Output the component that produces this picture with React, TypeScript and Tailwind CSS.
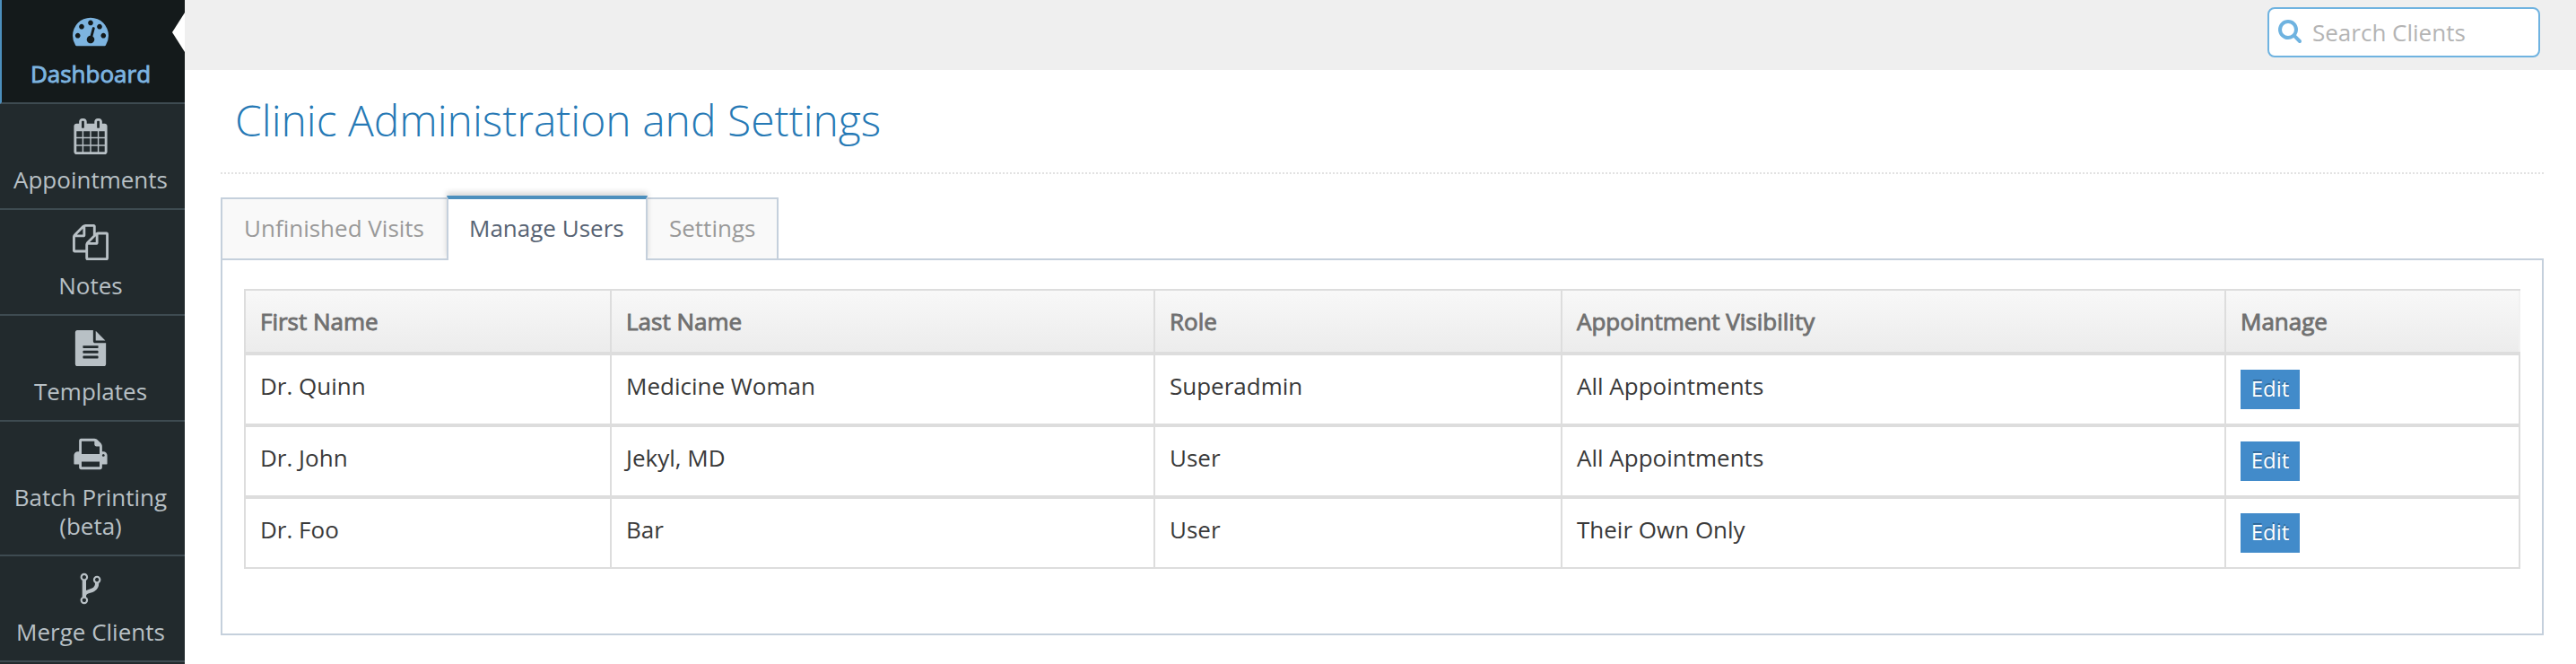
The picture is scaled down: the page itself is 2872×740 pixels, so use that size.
import React from "react";

type IconName = "dashboard" | "calendar" | "files" | "fileText" | "print" | "fork" | "search";

const ICONS: Record<IconName, string> = {
  dashboard:
    "M384 1152q0-53-37.5-90.5t-90.5-37.5-90.5 37.5-37.5 90.5 37.5 90.5 90.5 37.5 90.5-37.5 37.5-90.5zm192-448q0-53-37.5-90.5t-90.5-37.5-90.5 37.5-37.5 90.5 37.5 90.5 90.5 37.5 90.5-37.5 37.5-90.5zm428 481l101-382q6-26-7.5-48.5t-38.5-29.5-48 6.5-30 39.5l-101 382q-60 5-107 43.5t-63 98.5q-20 77 20 146t117 89 146-20 89-117q16-60-6-117t-72-91zm660-33q0-53-37.5-90.5t-90.5-37.5-90.5 37.5-37.5 90.5 37.5 90.5 90.5 37.5 90.5-37.5 37.5-90.5zm-640-640q0-53-37.5-90.5t-90.5-37.5-90.5 37.5-37.5 90.5 37.5 90.5 90.5 37.5 90.5-37.5 37.5-90.5zm448 192q0-53-37.5-90.5t-90.5-37.5-90.5 37.5-37.5 90.5 37.5 90.5 90.5 37.5 90.5-37.5 37.5-90.5zm320 448q0 261-141 483-19 29-54 29h-1402q-35 0-54-29-141-221-141-483 0-182 71-348t191-286 286-191 348-71 348 71 286 191 191 286 71 348z",
  calendar:
    "M192 1664h288v-288h-288v288zm352 0h320v-288h-320v288zm-352-352h288v-320h-288v320zm352 0h320v-320h-320v320zm-352-384h288v-288h-288v288zm736 736h320v-288h-320v288zm-384-736h320v-288h-320v288zm768 736h288v-288h-288v288zm-384-352h320v-320h-320v320zm-352-864v-288q0-13-9.500-22.500t-22.500-9.500h-64q-13 0-22.500 9.500t-9.500 22.500v288q0 13 9.500 22.500t22.500 9.500h64q13 0 22.500-9.500t9.500-22.500zm736 864h288v-320h-288v320zm-384-384h320v-288h-320v288zm384 0h288v-288h-288v288zm32-480v-288q0-13-9.500-22.500t-22.500-9.500h-64q-13 0-22.500 9.500t-9.500 22.500v288q0 13 9.500 22.500t22.500 9.500h64q13 0 22.500-9.500t9.500-22.500zm384-64v1280q0 52-38 90t-90 38h-1408q-52 0-90-38t-38-90v-1280q0-52 38-90t90-38h128v-96q0-66 47-113t113-47h64q66 0 113 47t47 113v96h384v-96q0-66 47-113t113-47h64q66 0 113 47t47 113v96h128q52 0 90 38t38 90z",
  files:
    "M1696 384q40 0 68 28t28 68v1216q0 40-28 68t-68 28h-960q-40 0-68-28t-28-68v-288h-544q-40 0-68-28t-28-68v-672q0-40 20-88t48-76l408-408q28-28 76-48t88-20h416q40 0 68 28t28 68v328q68-40 128-40h416zm-544 213l-299 299h299v-299zm-640-384l-299 299h299v-299zm196 647l316-316v-416h-384v416q0 40-28 68t-68 28h-416v640h512v-256q0-40 20-88t48-76zm956 804v-1152h-384v416q0 40-28 68t-68 28h-416v640h896z",
  fileText:
    "M1596 476q14 14 28 36h-472v-472q22 14 36 28zm-476 164h544v1056q0 40-28 68t-68 28h-1344q-40 0-68-28t-28-68v-1600q0-40 28-68t68-28h800v544q0 40 28 68t68 28zm160 736v-64q0-14-9-23t-23-9h-704q-14 0-23 9t-9 23v64q0 14 9 23t23 9h704q14 0 23-9t9-23zm0-256v-64q0-14-9-23t-23-9h-704q-14 0-23 9t-9 23v64q0 14 9 23t23 9h704q14 0 23-9t9-23zm0-256v-64q0-14-9-23t-23-9h-704q-14 0-23 9t-9 23v64q0 14 9 23t23 9h704q14 0 23-9t9-23z",
  print:
    "M448 1536h896v-256h-896v256zm0-640h896v-384h-160q-40 0-68-28t-28-68v-160h-640v640zm1152 64q0-26-19-45t-45-19-45 19-19 45 19 45 45 19 45-19 19-45zm128 0v416q0 13-9.500 22.500t-22.500 9.500h-224v160q0 40-28 68t-68 28h-960q-40 0-68-28t-28-68v-160h-224q-13 0-22.500-9.500t-9.500-22.500v-416q0-79 56.500-135.500t135.500-56.500h64v-544q0-40 28-68t68-28h672q40 0 88 20t76 48l152 152q28 28 48 76t20 88v256h64q79 0 135.500 56.500t56.500 135.500z",
  fork:
    "M672 1472q0-40-28-68t-68-28-68 28-28 68 28 68 68 28 68-28 28-68zm0-1152q0-40-28-68t-68-28-68 28-28 68 28 68 68 28 68-28 28-68zm640 128q0-40-28-68t-68-28-68 28-28 68 28 68 68 28 68-28 28-68zm96 0q0 52-26 96.500t-70 69.500q-2 287-226 414-67 38-203 81-128 40-169.500 71t-41.500 100v26q44 25 70 69.500t26 96.500q0 80-56 136t-136 56-136-56-56-136q0-52 26-96.500t70-69.500v-820q-44-25-70-69.500t-26-96.500q0-80 56-136t136-56 136 56 56 136q0 52-26 96.500t-70 69.500v497q54-26 154-57 55-17 87.500-29.500t70.500-31 59-39.500 40.500-51 28-69.500 8.500-91.500q-44-25-70-69.500t-26-96.500q0-80 56-136t136-56 136 56 56 136z",
  search:
    "M1216 832q0-185-131.500-316.500t-316.500-131.500-316.500 131.500-131.500 316.500 131.500 316.500 316.500 131.500 316.500-131.500 131.500-316.500zm512 832q0 52-38 90t-90 38q-54 0-90-38l-343-342q-179 124-399 124-143 0-273.500-55.500t-225-150-150-225-55.500-273.500 55.500-273.500 150-225 225-150 273.500-55.500 273.500 55.500 225 150 150 225 55.500 273.500q0 220-124 399l343 343q37 37 37 90z",
};

function Icon({ name, className }: { name: IconName; className: string }) {
  return (
    <svg viewBox="0 0 1792 1792" className={className} fill="currentColor" aria-hidden="true">
      <path d={ICONS[name]} />
    </svg>
  );
}

const NAV: { icon: IconName; label: string; height: string }[] = [
  { icon: "calendar", label: "Appointments", height: "h-[118px]" },
  { icon: "files", label: "Notes", height: "h-[118px]" },
  { icon: "fileText", label: "Templates", height: "h-[118px]" },
  { icon: "print", label: "Batch Printing (beta)", height: "h-[150px]" },
  { icon: "fork", label: "Merge Clients", height: "h-[118px]" },
];

const COLUMNS = ["First Name", "Last Name", "Role", "Appointment Visibility", "Manage"];

const USERS = [
  ["Dr. Quinn", "Medicine Woman", "Superadmin", "All Appointments"],
  ["Dr. John", "Jekyl, MD", "User", "All Appointments"],
  ["Dr. Foo", "Bar", "User", "Their Own Only"],
];

const GRID = "grid grid-cols-[408px_606px_454px_740px_328px]";

function Sidebar() {
  return (
    <nav className="flex w-[206px] shrink-0 flex-col bg-[#222a2d] text-center leading-8 text-[#b8c0c5]">
      <a className="relative flex h-[116px] shrink-0 flex-col items-center border-b-2 border-l-2 border-b-[#3e4b51] border-l-[#4c8fbd] bg-[#141a1b] pt-[14px] pr-[6px] text-[#7db4e0]">
        <Icon name="dashboard" className="size-10" />
        <span className="mt-3 [-webkit-text-stroke:0.9px_currentColor]">Dashboard</span>
        <svg viewBox="0 0 14 44" className="absolute top-[14px] right-0 h-11 w-3.5" fill="#fff">
          <path d="M14 0L0 22l14 22z" />
        </svg>
      </a>
      {NAV.map((item) => (
        <a
          key={item.label}
          className={`${item.height} flex shrink-0 flex-col items-center border-b-2 border-[#3e4b51] pt-4 pr-1`}
        >
          <Icon name={item.icon} className="size-10" />
          <span className="mt-3">{item.label}</span>
        </a>
      ))}
    </nav>
  );
}

function UserTable() {
  return (
    <div className="w-[2538px] border-t-2 border-l-2 border-[#ddd]">
      <div
        className={`${GRID} h-[70px] border-b-2 border-[#ddd] bg-linear-to-b from-[#f8f8f8] to-[#ececec] text-[#707070]`}
      >
        {COLUMNS.map((c) => (
          <div
            key={c}
            className="border-r-2 border-[#ddd] px-4 pt-4 [-webkit-text-stroke:0.9px_currentColor] last:border-[#f1f1f1]"
          >
            {c}
          </div>
        ))}
      </div>
      {USERS.map((u) => (
        <div key={u[0]} className={`${GRID} h-20 border-t-2 border-b-2 border-[#ddd] text-[#393939]`}>
          {u.map((v, i) => (
            <div key={i} className="border-r-2 border-[#ddd] px-4 pt-4">
              {v}
            </div>
          ))}
          <div className="border-r-2 border-[#ddd] px-4 pt-4">
            <button className="block h-11 w-[66px] bg-[#428bca] pb-[3px] text-2xl leading-[41px] text-white [text-shadow:0_-2px_0_rgba(0,0,0,0.25)]">
              Edit
            </button>
          </div>
        </div>
      ))}
    </div>
  );
}

export default function App() {
  return (
    <div className="flex h-[740px] w-[2872px] overflow-hidden bg-white font-['Open_Sans',sans-serif] text-[26px] leading-9">
      <Sidebar />
      <main className="flex min-w-0 flex-1 flex-col">
        <header className="flex h-[78px] shrink-0 justify-end bg-[#efefef] pt-2 pr-10">
          <label className="flex h-14 w-[304px] items-start rounded-lg border-2 border-[#6fb3e0] bg-white pt-2 pl-[9px] text-[#b4b4b4]">
            <Icon name="search" className="mt-0.5 size-7 text-[#6fb3e0]" />
            <span className="ml-[11px]">Search Clients</span>
          </label>
        </header>
        <div className="flex flex-col pr-9 pl-10">
          <h1 className="h-[114px] pt-[23px] pl-4 text-5xl leading-[65px] font-light text-[#2679b5]">
            Clinic Administration and Settings
          </h1>
          <div className="h-0.5 bg-[repeating-linear-gradient(90deg,#e2e2e2_0_2px,transparent_2px_4px)]" />
          <div className="mt-[26px] flex h-[68px] items-start">
            <div className="h-[68px] w-[252px] border-t-2 border-l-2 border-[#c5d0dc] bg-[#f9f9f9] pt-3.5 pl-6 text-[#999]">
              Unfinished Visits
            </div>
            <div className="relative z-10 -mt-0.5 h-[72px] w-56 shrink-0 border-x-2 border-t-4 border-x-[#c5d0dc] border-t-[#4c8fbd] bg-white pt-3.5 pl-[23px] text-[#576373] shadow-[0_-4px_6px_0_rgba(0,0,0,0.15)] [clip-path:inset(-12px_-12px_0_-12px)]">
              Manage Users
            </div>
            <div className="h-[68px] w-[146px] border-t-2 border-r-2 border-[#c5d0dc] bg-[#f9f9f9] pt-3.5 pl-6 text-[#999]">
              Settings
            </div>
          </div>
          <section className="h-[420px] border-2 border-[#c5d0dc] pt-8 pl-6">
            <UserTable />
          </section>
        </div>
      </main>
    </div>
  );
}
